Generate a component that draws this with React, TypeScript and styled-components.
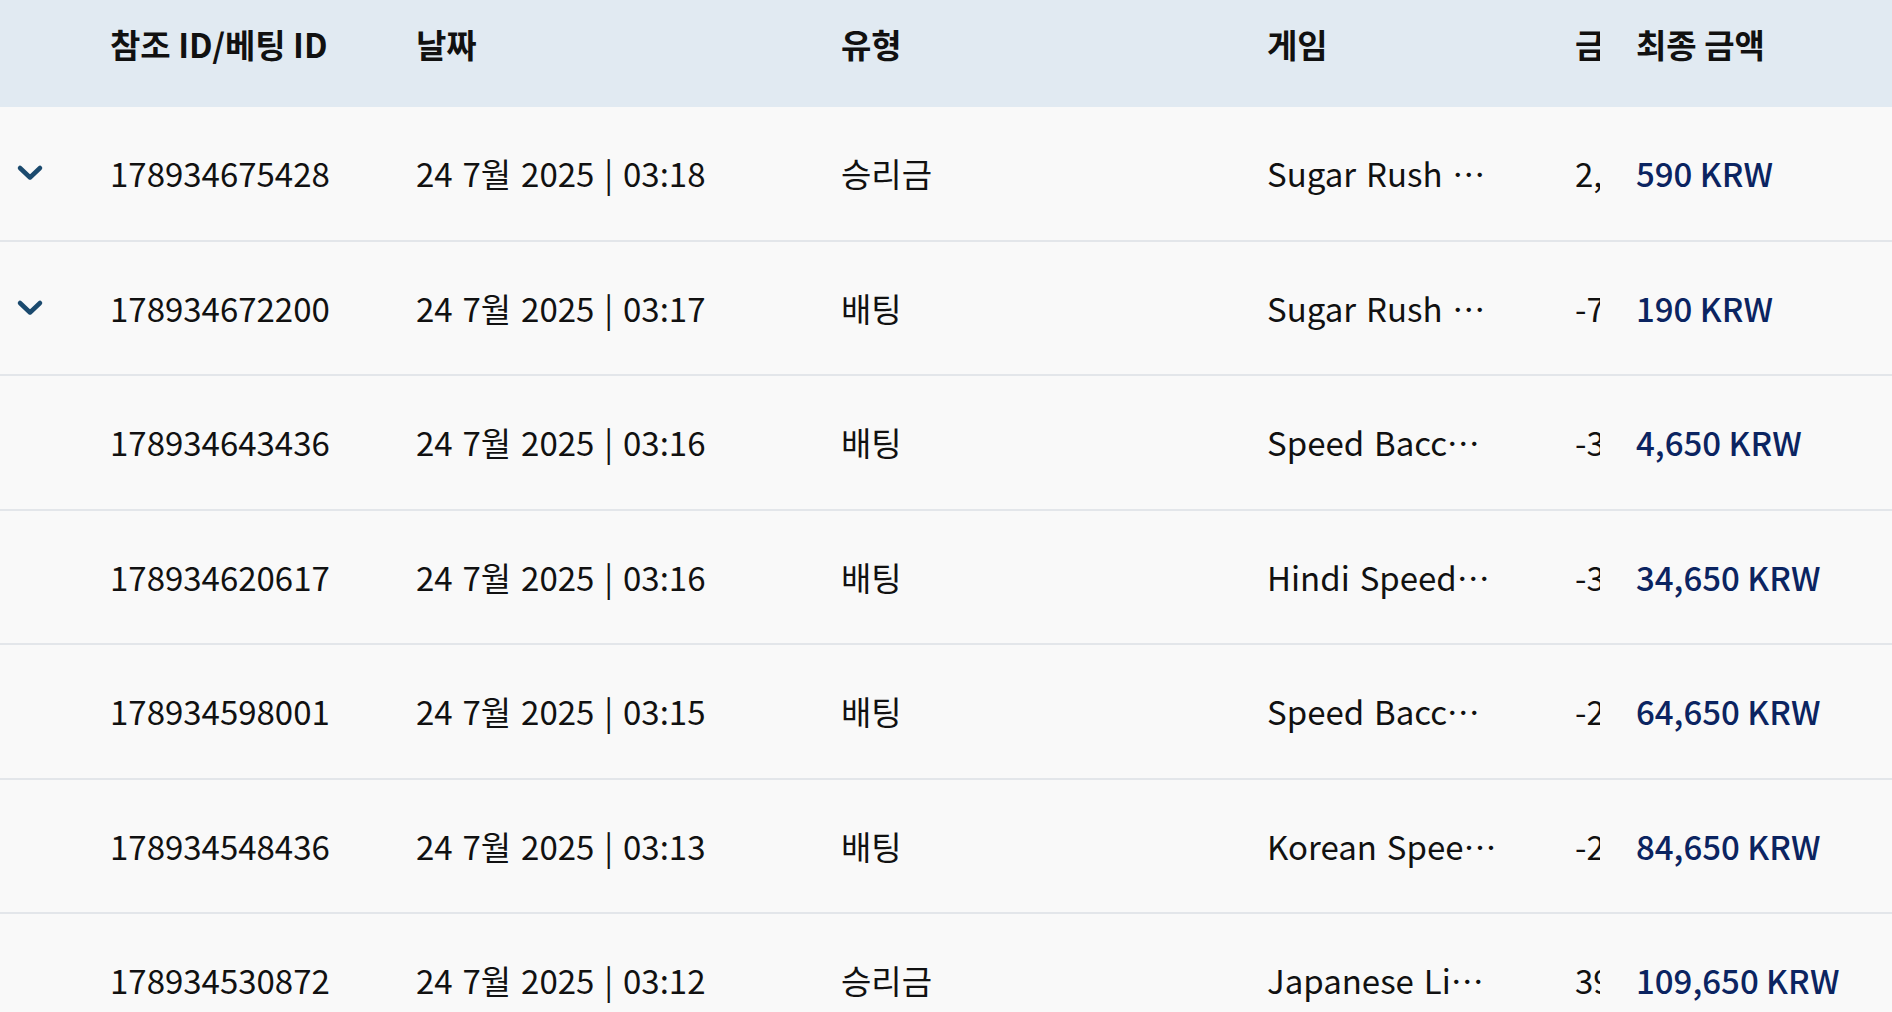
import React from 'react';
import styled, { createGlobalStyle } from 'styled-components';

const GlobalStyle = createGlobalStyle`
  html, body {
    margin: 0;
    padding: 0;
    background: #f9f9f9;
  }
  body {
    font-family: "Noto Sans CJK KR", "Noto Sans", sans-serif;
    color: #111;
  }
`;

const COLUMNS = '110px 306px 425px 426px 308px 61px 1fr';

const Table = styled.div`
  width: 100%;
  height: 1012px;
  overflow: hidden;
  background: #f9f9f9;
`;

const HeaderRow = styled.div`
  display: grid;
  grid-template-columns: ${COLUMNS};
  align-items: center;
  height: 107px;
  padding-bottom: 19px;
  box-sizing: border-box;
  background: #e1eaf2;
  font-size: 33px;
  font-weight: 700;
`;

const Row = styled.div`
  display: grid;
  grid-template-columns: ${COLUMNS};
  align-items: center;
  height: 134.5px;
  box-sizing: border-box;
  border-bottom: 2px solid #e3e6ea;
  font-size: 33px;
  font-weight: 400;
  word-spacing: 2.5px;
`;

const Cell = styled.div`
  white-space: nowrap;
  min-width: 0;
`;

const ToggleCell = styled.div`
  display: flex;
  align-items: center;
  padding-left: 16px;
`;

const GameCell = styled.div`
  white-space: nowrap;
  overflow: hidden;
  text-overflow: ellipsis;
  max-width: 231px;
`;

const Clipped = styled.div`
  width: 25px;
  white-space: nowrap;
  overflow: hidden;
`;

const FinalAmount = styled.div<{ $head?: boolean }>`
  white-space: nowrap;
  word-spacing: 0;
  color: ${p => (p.$head ? '#111' : '#0b2461')};
  font-weight: ${p => (p.$head ? 700 : 500)};
`;

const Chevron = () => (
  <svg width="28" height="18" viewBox="0 0 28 18" fill="none">
    <polyline
      points="4,4 14,13.5 24,4"
      stroke="#1b4a6e"
      strokeWidth="4.5"
      strokeLinecap="round"
      strokeLinejoin="round"
    />
  </svg>
);

interface Tx {
  id: string;
  date: string;
  type: string;
  game: string;
  amount: string;
  final: string;
  expandable: boolean;
}

const rows: Tx[] = [
  { id: '178934675428', date: '24 7월 2025 | 03:18', type: '승리금', game: 'Sugar Rush 1000', amount: '2,400 KRW', final: '590 KRW', expandable: true },
  { id: '178934672200', date: '24 7월 2025 | 03:17', type: '배팅', game: 'Sugar Rush 1000', amount: '-700 KRW', final: '190 KRW', expandable: true },
  { id: '178934643436', date: '24 7월 2025 | 03:16', type: '배팅', game: 'Speed Baccarat A', amount: '-30,000 KRW', final: '4,650 KRW', expandable: false },
  { id: '178934620617', date: '24 7월 2025 | 03:16', type: '배팅', game: 'Hindi Speed Baccarat A', amount: '-30,000 KRW', final: '34,650 KRW', expandable: false },
  { id: '178934598001', date: '24 7월 2025 | 03:15', type: '배팅', game: 'Speed Baccarat B', amount: '-20,000 KRW', final: '64,650 KRW', expandable: false },
  { id: '178934548436', date: '24 7월 2025 | 03:13', type: '배팅', game: 'Korean Speed Baccarat A', amount: '-25,000 KRW', final: '84,650 KRW', expandable: false },
  { id: '178934530872', date: '24 7월 2025 | 03:12', type: '승리금', game: 'Japanese Lightning Baccarat', amount: '39,000 KRW', final: '109,650 KRW', expandable: false },
];

export default function App() {
  return (
    <>
      <GlobalStyle />
      <Table>
        <HeaderRow>
          <Cell />
          <Cell>참조 ID/베팅 ID</Cell>
          <Cell>날짜</Cell>
          <Cell>유형</Cell>
          <Cell>게임</Cell>
          <Clipped>금액</Clipped>
          <FinalAmount $head>최종 금액</FinalAmount>
        </HeaderRow>
        {rows.map(r => (
          <Row key={r.id}>
            <ToggleCell>{r.expandable && <Chevron />}</ToggleCell>
            <Cell>{r.id}</Cell>
            <Cell>{r.date}</Cell>
            <Cell>{r.type}</Cell>
            <GameCell>{r.game}</GameCell>
            <Clipped>{r.amount}</Clipped>
            <FinalAmount>{r.final}</FinalAmount>
          </Row>
        ))}
      </Table>
    </>
  );
}
